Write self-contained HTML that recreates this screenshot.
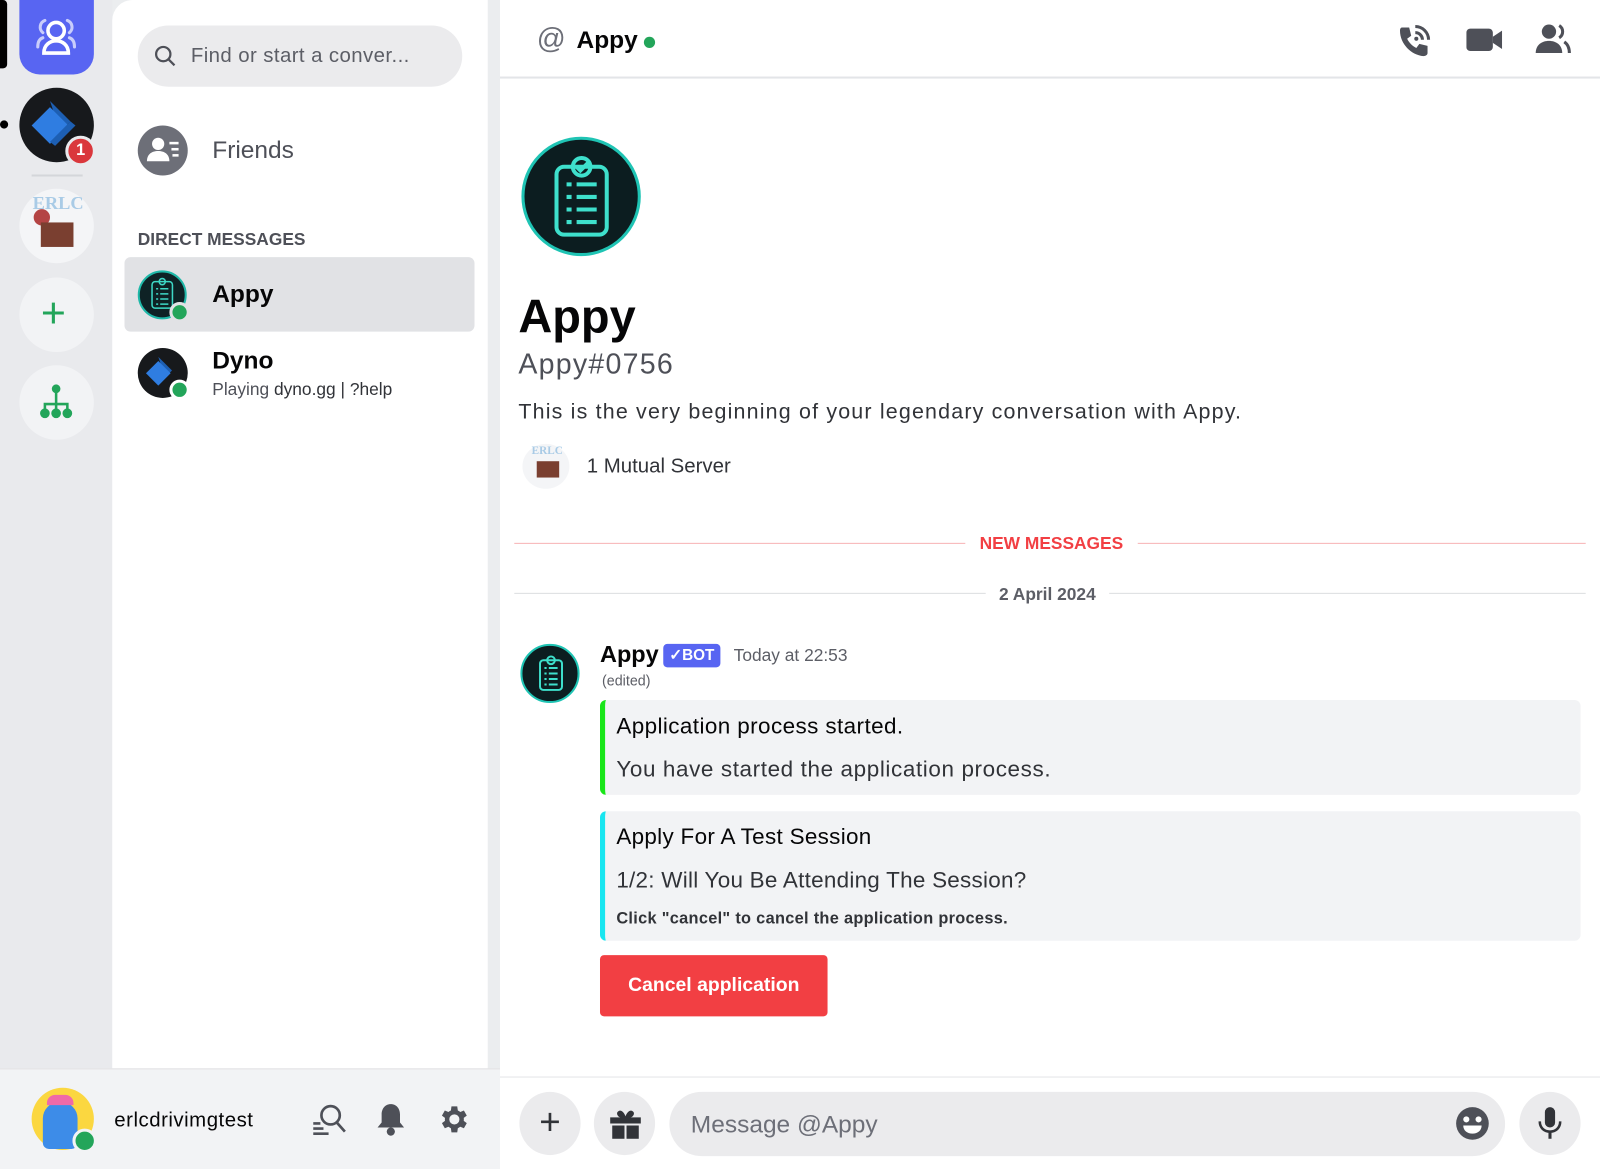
<!DOCTYPE html>
<html><head><meta charset="utf-8"><style>
*{box-sizing:border-box;margin:0;padding:0}
html,body{width:1600px;height:1169px;overflow:hidden;background:#fff;font-family:"Liberation Sans",sans-serif}
#w{position:absolute;left:0;top:0;width:1568px;height:1146px;transform:scale(1.0204);transform-origin:0 0;background:#ebedef}
.a{position:absolute}
.t{position:absolute;white-space:nowrap}
.circ{position:absolute;border-radius:50%}
</style></head><body><div id="w">
<!-- rail -->
<div class="a" style="left:0;top:0;width:110px;height:1047px;background:#e9eaed"></div>
<div class="a" style="left:0;top:0;width:7px;height:67px;background:#000;border-radius:0 4px 4px 0"></div>
<div class="a" style="left:19px;top:0;width:73px;height:73px;background:#5865f2;border-radius:0 0 20px 20px"></div>
<svg class="a" style="left:27px;top:6px" width="56" height="56" viewBox="0 0 56 56" fill="none" stroke="#fff" stroke-width="3.5" stroke-linecap="round"><circle cx="28" cy="24" r="8"/><path d="M16 46c0-8 6-12 12-12s12 4 12 12z"/><path d="M17 14a7 7 0 0 0-2 12M39 14a7 7 0 0 1 2 12M10 40c0-5 2-8 5-9M46 40c0-5-2-8-5-9" stroke="#c9cdfb" stroke-width="3"/></svg>
<div class="circ" style="left:0;top:118px;width:8px;height:8px;background:#000"></div>
<div class="circ" style="left:19px;top:86px;width:73px;height:73px;background:#17191c"></div>
<svg class="a" style="left:19px;top:86px" width="73" height="73" viewBox="0 0 73 73"><path d="M30 13l20 20-4 4-12-12z" fill="#1d5fb3"/><path d="M12 37l18-18 18 18-18 18z" fill="#2f7de1"/><path d="M50 33l5 4-20 20-5-4z" fill="#1d5fb3"/></svg>
<div class="circ" style="left:64px;top:133px;width:30px;height:30px;background:#da373c;border:3px solid #e9eaed;color:#fff;font-weight:bold;font-size:16px;text-align:center;line-height:24px">1</div>
<div class="a" style="left:31px;top:171px;width:50px;height:2px;background:#d4d6da"></div>
<div class="circ" style="left:19px;top:185px;width:73px;height:73px;background:#f4f5f7"></div>
<div class="t" style="left:32px;top:189px;font:bold 18px 'Liberation Serif',serif;color:#a9cbe6">ERLC</div>
<div class="circ" style="left:33px;top:205px;width:16px;height:16px;background:#b44444"></div>
<div class="a" style="left:40px;top:218px;width:32px;height:24px;background:#7a3f30"></div>
<div class="circ" style="left:19px;top:272px;width:73px;height:73px;background:#f2f3f5"></div>
<div class="t" style="left:40px;top:283px;font-size:42px;color:#23a55a;line-height:48px">+</div>
<div class="circ" style="left:19px;top:358px;width:73px;height:73px;background:#f2f3f5"></div>
<svg class="a" style="left:37px;top:376px" width="36" height="36" viewBox="0 0 36 36" fill="#23a55a" stroke="#23a55a" stroke-width="2.5"><circle cx="18" cy="5" r="3"/><path d="M18 5v20M7 28v-8h22v8" fill="none"/><circle cx="7" cy="29" r="3.5"/><circle cx="18" cy="29" r="3.5"/><circle cx="29" cy="29" r="3.5"/></svg>
<!-- DM panel -->
<div class="a" style="left:110px;top:0;width:368px;height:1047px;background:#fff;border-radius:20px 0 0 0"></div>
<div class="a" style="left:135px;top:25px;width:318px;height:60px;background:#ebebed;border-radius:30px"></div>
<svg class="a" style="left:150px;top:43px" width="24" height="24" viewBox="0 0 24 24" fill="none" stroke="#4e5058" stroke-width="2.2"><circle cx="10" cy="10" r="7"/><path d="M15 15l6 6"/></svg>
<div class="t" style="left:187px;top:44px;font-size:20px;color:#5c5e66;letter-spacing:0.4px">Find or start a conver...</div>
<div class="circ" style="left:135px;top:123px;width:49px;height:49px;background:#6d6f78"></div>
<svg class="a" style="left:141px;top:131px" width="38" height="34" viewBox="0 0 38 34" fill="#fff"><circle cx="14" cy="10" r="6"/><path d="M3 27c0-7 5-10 11-10s11 3 11 10z"/><rect x="25" y="8" width="9" height="2.5"/><rect x="27" y="14" width="7" height="2.5"/><rect x="28" y="20" width="6" height="2.5"/></svg>
<div class="t" style="left:208px;top:134px;font-size:24px;color:#4e5058">Friends</div>
<div class="t" style="left:135px;top:225px;font-size:17px;font-weight:bold;color:#4e5058">DIRECT MESSAGES</div>
<div class="a" style="left:122px;top:252px;width:343px;height:73px;background:#e1e2e5;border-radius:6px"></div>
<div class="circ" style="left:135px;top:265px;width:48px;height:48px;background:#0e2225;border:2px solid #1fb8a8"></div>
<svg class="a" style="left:146px;top:272px" width="26" height="32" viewBox="0 0 26 32" fill="none" stroke="#3ed8c6" stroke-width="1.5"><rect x="3" y="4" width="20" height="26" rx="3"/><circle cx="13" cy="4" r="3"/><path d="M7 11h2M11 11h8M7 16h2M11 16h8M7 21h2M11 21h8M7 26h2M11 26h8"/></svg>
<div class="circ" style="left:166px;top:296px;width:20px;height:20px;background:#23a55a;border:3px solid #e1e2e5"></div>
<div class="t" style="left:208px;top:275px;font-size:24px;font-weight:bold;color:#060607">Appy</div>
<div class="circ" style="left:135px;top:341px;width:49px;height:49px;background:#17191c"></div>
<svg class="a" style="left:135px;top:341px" width="49" height="49" viewBox="0 0 73 73"><path d="M30 13l20 20-4 4-12-12z" fill="#1d5fb3"/><path d="M12 37l18-18 18 18-18 18z" fill="#2f7de1"/></svg>
<div class="circ" style="left:166px;top:372px;width:20px;height:20px;background:#23a55a;border:3px solid #fff"></div>
<div class="t" style="left:208px;top:340px;font-size:24px;font-weight:bold;color:#060607">Dyno</div>
<div class="t" style="left:208px;top:372px;font-size:17px;color:#4e5058">Playing <span style="color:#313338">dyno.gg | ?help</span></div>
<!-- user panel -->
<div class="a" style="left:0;top:1047px;width:490px;height:99px;background:#f2f3f5;border-top:1px solid #e1e2e4"></div>
<div class="circ" style="left:31px;top:1066px;width:61px;height:61px;background:#fbd740"></div>
<div class="a" style="left:42px;top:1080px;width:34px;height:46px;background:#3d8ce8;border-radius:16px 16px 6px 6px"></div>
<div class="a" style="left:46px;top:1073px;width:26px;height:10px;background:#ef6aa8;border-radius:8px 8px 0 0"></div>
<div class="circ" style="left:71px;top:1106px;width:24px;height:24px;background:#23a55a;border:3px solid #f2f3f5"></div>
<div class="t" style="left:112px;top:1087px;font-size:20px;color:#060607;letter-spacing:0.5px">erlcdrivimgtest</div>
<svg class="a" style="left:305px;top:1081px" width="36" height="32" viewBox="0 0 36 32" fill="none" stroke="#4e5058" stroke-width="2.6"><circle cx="19" cy="12" r="9"/><path d="M25 19l8 9M2 20h7M2 25h10M2 30h15"/></svg>
<svg class="a" style="left:368px;top:1080px" width="30" height="34" viewBox="0 0 30 34" fill="#4e5058"><path d="M15 2c-6 0-9 5-9 10v8l-4 5h26l-4-5v-8c0-5-3-10-9-10z"/><circle cx="15" cy="29" r="4"/></svg>
<svg class="a" style="left:427px;top:1080px" width="34" height="34" viewBox="0 0 24 24" fill="#4e5058"><path d="M19.4 13a7.5 7.5 0 0 0 0-2l2.1-1.6-2-3.5-2.5 1a7 7 0 0 0-1.700-1L14.9 3h-4l-.4 2.9a7 7 0 0 0-1.7 1l-2.5-1-2 3.5L6.4 11a7.5 7.5 0 0 0 0 2l-2.1 1.6 2 3.5 2.5-1c.5.4 1.1.7 1.7 1l.4 2.9h4l.4-2.9c.6-.3 1.2-.6 1.7-1l2.5 1 2-3.5zM12.9 15.5a3.5 3.5 0 1 1 0-7 3.5 3.5 0 0 1 0 7z"/></svg>
<!-- chat -->
<div class="a" style="left:490px;top:0;width:1078px;height:1146px;background:#fff"></div>
<div class="a" style="left:490px;top:75px;width:1078px;height:2px;background:#e3e5e8"></div>
<div class="t" style="left:526px;top:22px;font-size:28px;color:#6d6f78">@</div>
<div class="t" style="left:565px;top:26px;font-size:24px;font-weight:bold;color:#060607">Appy</div>
<div class="circ" style="left:631px;top:36px;width:11px;height:11px;background:#23a55a"></div>
<svg class="a" style="left:1368px;top:22px" width="36" height="36" viewBox="0 0 36 36" fill="#4e5058"><path d="M6 5h7l2 8-4 3c2 4 5 7 9 9l3-4 8 2v7c0 2-2 3-4 3C15 32 4 21 4 8c0-2 1-3 2-3z"/><path d="M19 10a7 7 0 0 1 7 7M19 4a13 13 0 0 1 13 13" fill="none" stroke="#4e5058" stroke-width="3"/><circle cx="20" cy="16" r="2"/></svg>
<svg class="a" style="left:1437px;top:26px" width="36" height="26" viewBox="0 0 36 26" fill="#4e5058"><rect x="0" y="2" width="26" height="22" rx="4"/><path d="M26 10l9-6v18l-9-6z"/></svg>
<svg class="a" style="left:1504px;top:22px" width="36" height="32" viewBox="0 0 36 32" fill="#4e5058"><circle cx="14" cy="9" r="7"/><path d="M1 30c0-8 6-12 13-12s13 4 13 12z"/><path d="M24 3a7 7 0 0 1 0 12M29 19c3 2 5 6 5 11" fill="none" stroke="#4e5058" stroke-width="3"/></svg>
<div class="circ" style="left:511px;top:134px;width:117px;height:117px;background:#0c1d20;border:3px solid #1fc4b4"></div>
<svg class="a" style="left:538px;top:150px" width="64" height="86" viewBox="0 0 26 34" fill="none" stroke="#3ee0cc" stroke-width="1.6"><rect x="3" y="5" width="20" height="27" rx="3"/><circle cx="13" cy="5" r="3.5"/><path d="M11 5l1.5 1.5 3-3M7 12h2M11 12h8M7 17h2M11 17h8M7 22h2M11 22h8M7 27h2M11 27h8"/></svg>
<div class="t" style="left:508px;top:283px;font-size:46px;font-weight:bold;color:#060607">Appy</div>
<div class="t" style="left:508px;top:341px;font-size:28px;color:#4e5058;letter-spacing:1.2px">Appy#0756</div>
<div class="t" style="left:508px;top:392px;font-size:21px;color:#313338;letter-spacing:1.15px">This is the very beginning of your legendary conversation with Appy.</div>
<div class="circ" style="left:512px;top:435px;width:46px;height:44px;background:#f4f5f7"></div>
<div class="t" style="left:521px;top:436px;font:bold 11px 'Liberation Serif',serif;color:#a9cbe6">ERLC</div>
<div class="a" style="left:526px;top:452px;width:22px;height:16px;background:#7a3f30"></div>
<div class="t" style="left:575px;top:446px;font-size:20px;color:#313338">1 Mutual Server</div>
<div class="a" style="left:504px;top:532px;width:1050px;height:1px;background:#f7b3b5"></div>
<div class="t" style="left:946px;top:523px;padding:0 14px;background:#fff;font-size:17px;font-weight:bold;color:#f23f43">NEW MESSAGES</div>
<div class="a" style="left:504px;top:581px;width:1050px;height:1px;background:#dcdee1"></div>
<div class="t" style="left:966px;top:573px;padding:0 13px;background:#fff;font-size:17px;font-weight:bold;color:#5c5e66">2 April 2024</div>
<div class="circ" style="left:510px;top:631px;width:58px;height:58px;background:#0c1d20;border:2px solid #1fc4b4"></div>
<svg class="a" style="left:526px;top:638px" width="28" height="44" viewBox="0 0 26 34" fill="none" stroke="#3ee0cc" stroke-width="1.8"><rect x="3" y="5" width="20" height="27" rx="3"/><circle cx="13" cy="5" r="3.5"/><path d="M7 12h2M11 12h8M7 17h2M11 17h8M7 22h2M11 22h8M7 27h2M11 27h8"/></svg>
<div class="t" style="left:588px;top:628px;font-size:23px;font-weight:bold;color:#060607">Appy</div>
<div class="a" style="left:650px;top:631px;width:56px;height:23px;background:#5865f2;border-radius:4px;color:#fff;font-size:15px;font-weight:bold;line-height:23px;text-align:center">✓BOT</div>
<div class="t" style="left:719px;top:633px;font-size:17px;color:#5c5e66">Today at 22:53</div>
<div class="t" style="left:590px;top:659px;font-size:14px;color:#5c5e66">(edited)</div>
<div class="a" style="left:588px;top:686px;width:961px;height:93px;background:#f2f3f5;border-left:5px solid #19e619;border-radius:6px"></div>
<div class="t" style="left:604px;top:699px;font-size:22px;color:#060607;letter-spacing:0.4px">Application process started.</div>
<div class="t" style="left:604px;top:741px;font-size:22px;color:#313338;letter-spacing:0.6px">You have started the application process.</div>
<div class="a" style="left:588px;top:795px;width:961px;height:127px;background:#f2f3f5;border-left:5px solid #19e6f0;border-radius:6px"></div>
<div class="t" style="left:604px;top:807px;font-size:22px;color:#060607;letter-spacing:0.3px">Apply For A Test Session</div>
<div class="t" style="left:604px;top:850px;font-size:22px;color:#313338;letter-spacing:0.25px">1/2: Will You Be Attending The Session?</div>
<div class="t" style="left:604px;top:892px;font-size:16px;font-weight:bold;color:#313338;letter-spacing:0.3px">Click "cancel" to cancel the application process.</div>
<div class="a" style="left:588px;top:936px;width:223px;height:60px;background:#f23f43;border-radius:4px;color:#fff;font-size:19px;font-weight:bold;line-height:60px;text-align:center">Cancel application</div>
<div class="a" style="left:490px;top:1055px;width:1078px;height:1px;background:#e3e5e8"></div>
<div class="circ" style="left:509px;top:1070px;width:60px;height:62px;background:#ebebed;text-align:center;font-size:36px;line-height:60px;color:#313338">+</div>
<div class="circ" style="left:582px;top:1070px;width:60px;height:62px;background:#ebebed"></div>
<svg class="a" style="left:597px;top:1085px" width="32" height="32" viewBox="0 0 32 32" fill="#313338"><path d="M9 4c3-2 6 2 7 5 1-3 4-7 7-5 3 2 0 6-2 6h10v6H1v-6h10c-2 0-5-4-2-6z"/><rect x="3" y="18" width="12" height="13"/><rect x="17" y="18" width="12" height="13"/></svg>
<div class="a" style="left:656px;top:1070px;width:819px;height:63px;background:#ebebed;border-radius:32px"></div>
<div class="t" style="left:677px;top:1089px;font-size:24px;color:#6d6f78">Message @Appy</div>
<svg class="a" style="left:1426px;top:1084px" width="34" height="34" viewBox="0 0 34 34"><circle cx="17" cy="17" r="16" fill="#4e5058"/><circle cx="11" cy="13" r="3" fill="#fff"/><circle cx="23" cy="13" r="3" fill="#fff"/><path d="M8 19h18c0 5-4 8-9 8s-9-3-9-8z" fill="#fff"/></svg>
<div class="circ" style="left:1489px;top:1070px;width:60px;height:62px;background:#ebebed"></div>
<svg class="a" style="left:1505px;top:1084px" width="28" height="34" viewBox="0 0 28 34" fill="#313338"><rect x="9" y="1" width="10" height="20" rx="5"/><path d="M4 15c0 6 4 10 10 10s10-4 10-10" fill="none" stroke="#313338" stroke-width="2.5"/><rect x="12.5" y="25" width="3" height="7"/></svg>
</div></body></html>
